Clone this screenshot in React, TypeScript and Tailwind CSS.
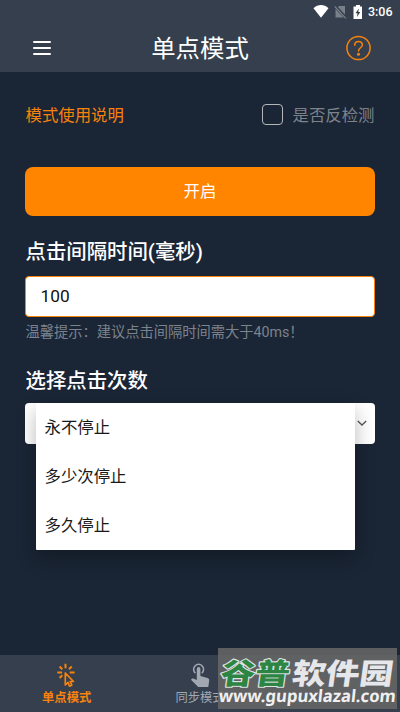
import React from "react";

const OPTIONS = ["永不停止", "多少次停止", "多久停止"];

function StatusBar() {
  return (
    <div className="flex h-[23px] items-center justify-end pr-[7.500px] text-white">
      <svg className="mr-[5px] h-4 w-4" viewBox="0 0 16 16" fill="currentColor">
        <path d="M.5 4.200C5-.2 11-.2 15.500 4.200L8 13.800z" />
      </svg>
      <svg className="mr-[6px] h-[14px] w-[13px] text-[#78808a]" viewBox="0 0 13 14">
        <path d="M5 1h6v11.500H1.500V4.500z" fill="currentColor" />
        <path d="M1 1l11.500 12.500" stroke="#353f4e" strokeWidth="3" />
        <path d="M.8 1.500l11 11.800" stroke="currentColor" strokeWidth="1.200" />
      </svg>
      <svg className="mr-[5px] h-[14px] w-[10px]" viewBox="0 0 10 14">
        <path d="M3 0h4v1.500h2V14H.5V1.500H3z" fill="currentColor" />
        <path d="M5.800 3.500L2.500 8.200h2L4 12l3.300-5h-2z" fill="#353f4e" />
      </svg>
      <span className="font-['Roboto'] text-[12.500px] font-medium leading-6">3:06</span>
    </div>
  );
}

function Header() {
  return (
    <header className="h-[72px] bg-[#353f4e]">
      <StatusBar />
      <div className="flex h-[50px] items-center pl-[33px] pr-[28px]">
        <div className="flex w-[21px] shrink-0 flex-col gap-1">
          <span className="h-0.5 w-[18px] rounded-sm bg-white" />
          <span className="h-0.5 w-[18px] rounded-sm bg-white" />
          <span className="h-0.5 w-[18px] rounded-sm bg-white" />
        </div>
        <h1 className="flex-1 pt-[2px] text-center text-[24.400px] leading-none text-white">单点模式</h1>
        <svg className="h-[26px] w-[26px] shrink-0" viewBox="0 0 26 26" fill="none" stroke="#f7830c" strokeWidth="1.500" strokeLinecap="round">
          <circle cx="12.500" cy="13" r="11.600" />
          <path d="M8.700 10.200c0-5 7.700-4.800 7.700-.4 0 3-3.900 3-3.900 6.200" />
          <circle cx="12.500" cy="19.200" r=".8" fill="#f7830c" />
        </svg>
      </div>
    </header>
  );
}

function Dropdown() {
  return (
    <div className="relative mt-[8px] flex h-[41px] items-center justify-end rounded bg-white pr-[8px]">
      <svg className="mb-px h-[10px] w-[10px]" viewBox="0 0 10 10" fill="none" stroke="#555" strokeWidth="1.300">
        <path d="M.8 3L5 7l4.200-4" />
      </svg>
      <ul className="absolute left-[11px] top-0 h-[147px] w-[318.500px] rounded-[1px] bg-white shadow-[0_8px_20px_rgba(0,0,0,0.28)]">
        {OPTIONS.map((option) => (
          <li key={option} className="flex h-[49px] items-center pl-[8.500px] pt-[2px] text-[16.400px] text-[#181818]">
            {option}
          </li>
        ))}
      </ul>
    </div>
  );
}

function ClickIcon() {
  return (
    <svg className="h-6 w-6" viewBox="0 0 24 24" fill="none" stroke="currentColor" strokeWidth="2">
      <path d="M10.500 .8v4.500M4.600 3.500l2.700 2.700M16.700 3.500L14 6.200M2.300 9.500h4.800M14.700 9.500h4.900M7.300 12.300L4.600 15" />
      <path d="M10.300 10v12l2.700-2.600 1.500 3.700 2.300-.9-1.600-3.700h3.300z" strokeLinejoin="round" strokeWidth="1.700" />
    </svg>
  );
}

function TouchIcon() {
  return (
    <svg className="h-6 w-6" viewBox="0 0 24 24" fill="currentColor">
      <path d="M7.400 10.200a5 5 0 1 1 6.400 0" fill="none" stroke="currentColor" strokeWidth="1.500" />
      <path d="M8.800 5.900a1.800 1.800 0 0 1 3.600 0v7l7.200 2.200c1.300.5 1.800 1.200 1.600 2.500L20.300 24H10.200L3 16.800c.9-1.500 2.200-1.500 3.400-.9l2.400 1.100z" />
    </svg>
  );
}

function Watermark() {
  return (
    <div className="absolute bottom-[3px] right-[3px] h-[61px] w-[179px] bg-[#656565]/90">
      <svg className="h-full w-full overflow-visible" viewBox="0 0 179 61">
        <g
          transform="skewX(-8)"
          fontFamily="'Noto Sans CJK SC', sans-serif"
          fontWeight="900"
          fontSize="29"
          paintOrder="stroke"
          strokeLinejoin="round"
        >
          <text x="6.500" y="36" textLength="69" lengthAdjust="spacingAndGlyphs" fill="#2c8542" stroke="#dfe3e2" strokeWidth="2.200">谷普</text>
          <text x="78" y="36" textLength="101" lengthAdjust="spacingAndGlyphs" fill="#e6e7ea">软件园</text>
        </g>
        <text
          x="6"
          y="54"
          transform="skewX(-6)"
          textLength="177"
          lengthAdjust="spacingAndGlyphs"
          fontFamily="'Noto Sans', sans-serif"
          fontWeight="700"
          fontSize="17"
          fill="#f0f0f2"
        >
          www.gupuxlazal.com
        </text>
      </svg>
    </div>
  );
}

export default function App() {
  return (
    <div className="relative flex h-[712px] w-[400px] flex-col overflow-hidden bg-[#1a2535] font-['Roboto','Noto_Sans_CJK_SC',sans-serif]">
      <Header />

      <main className="flex-1 px-[25px] pt-[31px]">
        <div className="flex h-6 items-center">
          <a className="pl-[0.500px] pt-[2px] text-[16.400px] text-[#f7830c]">模式使用说明</a>
          <span className="mb-px ml-auto h-[21px] w-[21px] rounded-[4px] border-[1.500px] border-[#b4b6ba]" />
          <span className="ml-[10px] mr-[0.500px] pt-[2px] text-[16.400px] text-[#7c838c]">是否反检测</span>
        </div>

        <button className="mt-10 flex h-[49px] w-full items-center justify-center rounded-lg bg-[#ff8400] pt-px text-[16.400px] text-white">
          开启
        </button>

        <h2 className="mt-[21px] pl-[0.500px] text-[20.400px] font-medium leading-[30px] text-white">点击间隔时间(毫秒)</h2>
        <div className="mt-[9px] flex h-[41px] items-center rounded border border-[#f7830c] bg-white pl-[14.500px] pt-px text-[17.300px] text-[#111]">
          100
        </div>
        <p className="mt-1 pl-[0.500px] text-[14.250px] leading-[22px] text-[#7c838c]">温馨提示：建议点击间隔时间需大于40ms！</p>

        <h2 className="mt-[25px] pl-[0.500px] text-[20.400px] font-medium leading-[27px] text-white">选择点击次数</h2>
        <Dropdown />
      </main>

      <nav className="grid h-[57px] grid-cols-3 bg-[#353f4e] text-[12.300px] leading-4 text-[#a2a8b1]">
        <div className="flex flex-col items-center pt-[8px] font-bold text-[#f7830c]">
          <ClickIcon />
          <span className="mt-[3px]">单点模式</span>
        </div>
        <div className="flex flex-col items-center pt-[8px]">
          <TouchIcon />
          <span className="mt-[3px]">同步模式</span>
        </div>
      </nav>

      <Watermark />
    </div>
  );
}
